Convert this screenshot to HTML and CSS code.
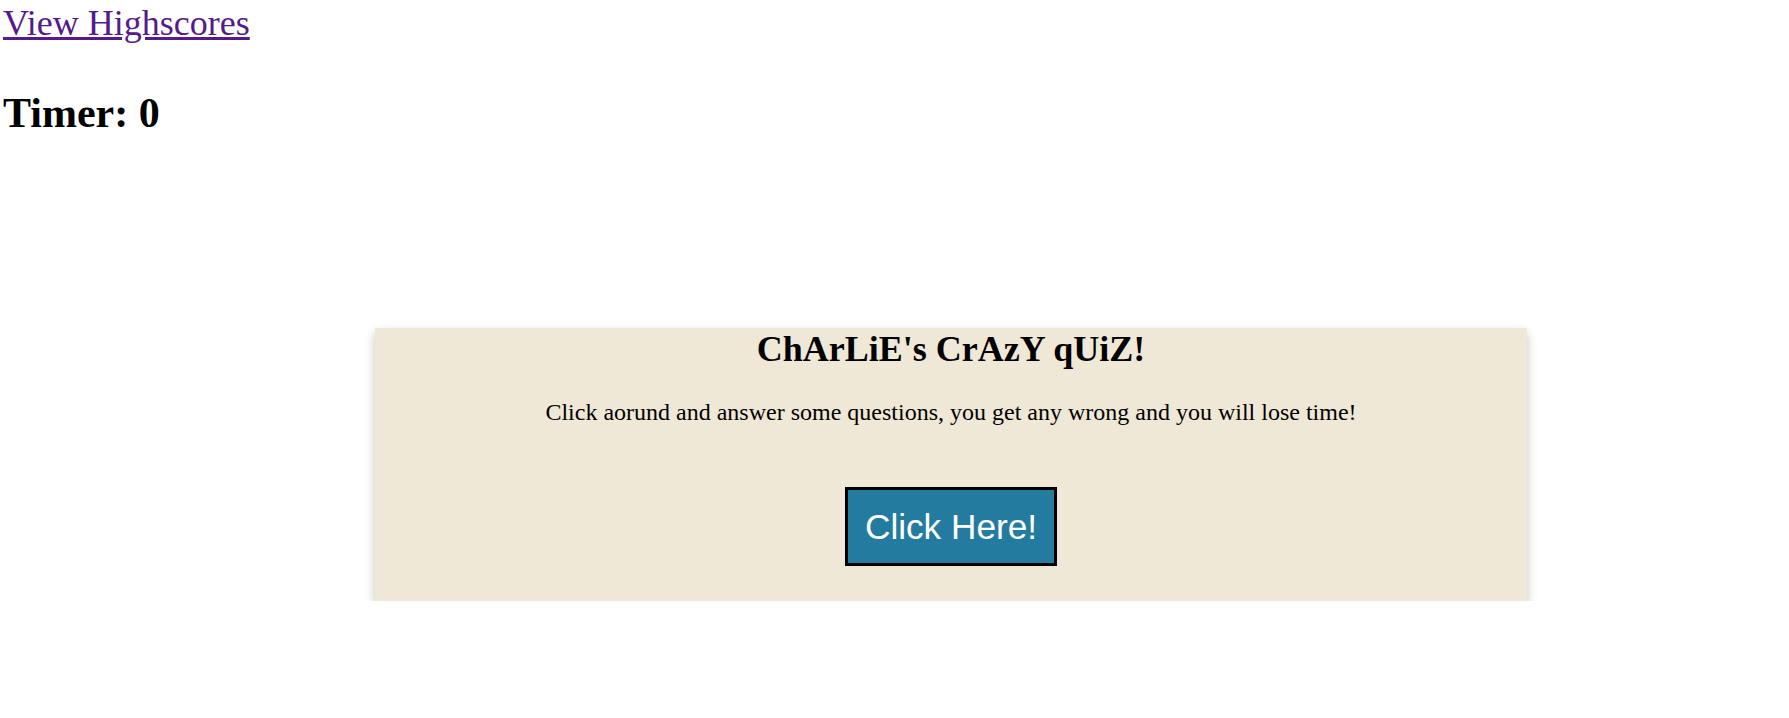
FILE: index.html
```html
<!DOCTYPE html>
<html lang="en">
<head>
<meta charset="utf-8">
<title>ChArLiE's CrAzY qUiZ!</title>
<link rel="stylesheet" href="styles.css">
</head>
<body>
  <header class="top">
    <div class="scores"><a class="scores-link" href="#">View Highscores</a></div>
    <h1 class="timer">Timer: 0</h1>
  </header>
  <main class="card">
    <h1 class="card-title">ChArLiE's CrAzY qUiZ!</h1>
    <p class="card-text">Click aorund and answer some questions, you get any wrong and you will lose time!</p>
    <div class="actions">
      <button class="start-btn" type="button">Click Here!</button>
    </div>
  </main>
</body>
</html>
```
FILE: styles.css
```css
html, body {
  margin: 0;
  background: #ffffff;
}

body {
  padding: 3px 0 0 3px;
  font-family: "Liberation Serif", "Times New Roman", serif;
  color: #000;
}

.scores {
  font-size: 36px;
  line-height: 1.15;
}

.scores-link {
  color: #551a8b;
  text-decoration: underline;
}

.timer {
  margin: 44.5px 0 0;
  font-size: 42px;
  font-weight: bold;
  line-height: 1.15;
}

.card {
  display: flex;
  flex-direction: column;
  align-items: center;
  width: 1152px;
  margin: 190.7px 0 0 372px;
  padding: 1px 0 35px;
  background: #f0e8d6;
  box-shadow: 0 5px 10px rgba(0, 0, 0, 0.24);
  box-sizing: border-box;
}

.card-title {
  margin: 0;
  font-size: 36px;
  font-weight: bold;
  line-height: 1.15;
  text-align: center;
}

.card-text {
  margin: 29px 0 0;
  font-size: 24px;
  line-height: 1.15;
  text-align: center;
}

.actions {
  display: flex;
  justify-content: center;
  margin-top: 60.3px;
}

.start-btn {
  font-family: "Liberation Sans", Arial, sans-serif;
  font-size: 35.2px;
  line-height: normal;
  color: #ffffff;
  background: #247ba0;
  border: 3px solid #000000;
  border-radius: 0;
  padding: 16.5px 16.5px;
  margin: 0;
  cursor: pointer;
}
```
